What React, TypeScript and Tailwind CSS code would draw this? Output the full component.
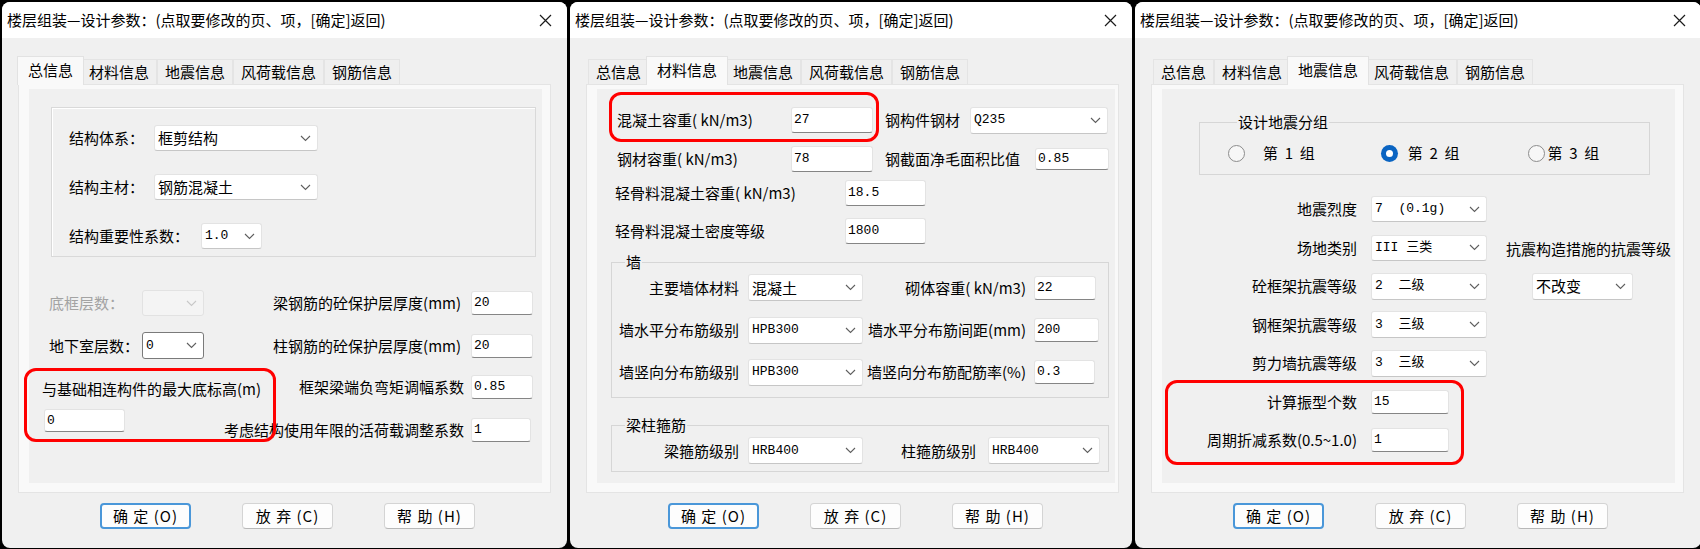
const TITLE = "楼层组装—设计参数：(点取要修改的页、项，[确定]返回)";
const TABS = ["总信息", "材料信息", "地震信息", "风荷载信息", "钢筋信息"];
const mono = "font-['Liberation_Mono','Noto_Sans_CJK_SC',monospace] text-[13px]";

function Chevron({ light }: { light?: boolean }) {
  return (
    <svg width="11" height="7" viewBox="0 0 11 7" className="shrink-0">
      <path d="M1 1l4.5 4.5L10 1" fill="none" stroke={light ? "#c8c8c8" : "#5f5f5f"} strokeWidth="1.1" />
    </svg>
  );
}

function Select({
  w,
  h = "h-[26px]",
  value = "",
  cjk,
  disabled,
  focused,
}: {
  w: string;
  h?: string;
  value?: string;
  cjk?: boolean;
  disabled?: boolean;
  focused?: boolean;
}) {
  const look = disabled
    ? "border-[#e2e2e2] bg-[#f4f4f4]"
    : focused
      ? "border-[#7a7a7a] bg-white"
      : "border-[#e3e3e3] border-b-[#c6c6c6] bg-white";
  return (
    <div className={`flex shrink-0 items-center justify-between rounded-[3px] border pl-[3px] pr-[6px] ${look} ${w} ${h}`}>
      <span className={`whitespace-pre ${cjk ? "text-[15px]" : mono}`}>{value}</span>
      <Chevron light={disabled} />
    </div>
  );
}

function Input({ w, h = "h-[24px]", value }: { w: string; h?: string; value: string }) {
  return (
    <div className={`flex shrink-0 items-center rounded-[3px] border border-[#e3e3e3] border-b-[#858585] bg-white pl-[2px] ${mono} ${w} ${h}`}>
      {value}
    </div>
  );
}

function Tabs({ active }: { active: number }) {
  return (
    <div className="flex h-[28px] items-end pl-[2px]">
      {TABS.map((t, i) =>
        i === active ? (
          <div key={t} className="relative z-10 -mx-[3px] -mb-px flex h-[29px] items-center border border-b-0 border-[#e2e2e2] bg-[#f9f9f9] px-[10px] pb-[3px]">
            {t}
          </div>
        ) : (
          <div key={t} className="flex h-[25px] items-center border border-b-0 border-[#e4e4e4] bg-[#efefef] px-[7px]">
            {t}
          </div>
        )
      )}
    </div>
  );
}

function Buttons() {
  return (
    <div className="mt-[10px] flex gap-[51px] pl-[98px]">
      <div className="flex h-[26px] w-[91px] items-center justify-center rounded-[4px] border-2 border-[#4a97d9] bg-[#fdfdfd] tracking-[1px] whitespace-pre">
        确 定 (O)
      </div>
      <div className="flex h-[26px] w-[91px] items-center justify-center rounded-[4px] border border-[#d4d4d4] border-b-[#b8b8b8] bg-[#fdfdfd] tracking-[1px] whitespace-pre">
        放 弃 (C)
      </div>
      <div className="flex h-[26px] w-[91px] items-center justify-center rounded-[4px] border border-[#d4d4d4] border-b-[#b8b8b8] bg-[#fdfdfd] tracking-[1px] whitespace-pre">
        帮 助 (H)
      </div>
    </div>
  );
}

function Dialog({
  width,
  active,
  mark,
  children,
}: {
  width: string;
  active: number;
  mark: string;
  children: React.ReactNode;
}) {
  return (
    <div className={`relative flex h-[546px] shrink-0 flex-col overflow-hidden rounded-[8px] bg-[#f0f0f0] ${width}`}>
      {/* title bar */}
      <div className="flex h-[36px] shrink-0 items-center bg-white pl-[5px] pr-[7px]">
        <span className="text-black">{TITLE}</span>
        <span className="ml-auto flex w-[30px] justify-center">
          <svg width="13" height="13" viewBox="0 0 13 13">
            <path d="M1 1l11 11M12 1L1 12" stroke="#1b1b1b" strokeWidth="1.2" />
          </svg>
        </span>
      </div>

      <div className="pl-[16px] pt-[18px]">
        <Tabs active={active} />
        <div className="flex h-[409px] w-[533px] border border-[#e4e4e4] bg-[#f9f9f9] pb-[9px] pl-[10px] pr-[8px] pt-[4px]">
          <div className="flex-1 bg-[#f0f0f0]">{children}</div>
        </div>
      </div>

      <Buttons />

      {/* red annotation */}
      <div className={`pointer-events-none absolute rounded-[12px] border-[3px] border-[#ff0000] ${mark}`} />
    </div>
  );
}

function GeneralTab() {
  return (
    <div className="pt-[18px]">
      <div className="ml-[22px] mr-[6px] flex h-[150px] flex-col gap-[23px] border border-[#d9d9d9] pl-[17px] pt-[17px] shadow-[inset_1px_1px_0_#ffffff]">
        <div className="flex h-[26px] items-center">
          <span className="w-[85px] shrink-0">结构体系：</span>
          <Select w="w-[164px]" value="框剪结构" cjk />
        </div>
        <div className="flex h-[26px] items-center">
          <span className="w-[85px] shrink-0">结构主材：</span>
          <Select w="w-[164px]" value="钢筋混凝土" cjk />
        </div>
        <div className="flex h-[26px] items-center">
          <span className="w-[132px] shrink-0">结构重要性系数：</span>
          <Select w="w-[61px]" value="1.0" />
        </div>
      </div>

      <div className="mt-[33px] flex flex-col pl-[13px] pr-[9px]">
        <div className="flex h-[26px] items-center justify-between">
          <div className="flex items-center pl-[7px]">
            <span className="w-[93px] shrink-0 text-[#a3a3a3]">底框层数：</span>
            <Select w="w-[62px]" disabled />
          </div>
          <div className="flex items-center gap-[10px]">
            <span>梁钢筋的砼保护层厚度(mm)</span>
            <Input w="w-[62px]" value="20" />
          </div>
        </div>

        <div className="mt-[16px] flex h-[27px] items-center justify-between">
          <div className="flex items-center pl-[7px]">
            <span className="w-[93px] shrink-0">地下室层数：</span>
            <Select w="w-[62px]" h="h-[27px]" value="0" focused />
          </div>
          <div className="flex items-center gap-[10px]">
            <span>柱钢筋的砼保护层厚度(mm)</span>
            <Input w="w-[62px]" value="20" />
          </div>
        </div>

        <div className="mt-[16px] flex h-[24px] items-center justify-between">
          <span className="pt-[3px]">与基础相连构件的最大底标高(m)</span>
          <div className="flex items-center gap-[7px]">
            <span>框架梁端负弯矩调幅系数</span>
            <Input w="w-[62px]" value="0.85" />
          </div>
        </div>

        <div className="mt-[10px] flex items-start justify-between">
          <div className="pl-[2px]">
            <Input w="w-[81px]" h="h-[23px]" value="0" />
          </div>
          <div className="mt-[9px] flex items-center gap-[7px] pr-[2px]">
            <span>考虑结构使用年限的活荷载调整系数</span>
            <Input w="w-[60px]" value="1" />
          </div>
        </div>
      </div>
    </div>
  );
}

function MaterialTab() {
  return (
    <div className="pl-[14px] pr-[6px] pt-[18px]">
      <div className="flex h-[26px] items-center pl-[6px]">
        <span className="w-[174px] shrink-0">混凝土容重( kN/m3)</span>
        <Input w="w-[82px]" h="h-[26px]" value="27" />
        <span className="ml-[12px] w-[85px] shrink-0">钢构件钢材</span>
        <Select w="w-[138px]" h="h-[27px]" value="Q235" />
      </div>
      <div className="mt-[13px] flex h-[26px] items-center pl-[6px]">
        <span className="w-[174px] shrink-0">钢材容重( kN/m3)</span>
        <Input w="w-[82px]" h="h-[26px]" value="78" />
        <span className="ml-[12px] w-[150px] shrink-0">钢截面净毛面积比值</span>
        <Input w="w-[74px]" h="h-[22px]" value="0.85" />
      </div>
      <div className="mt-[8px] flex h-[26px] items-center pl-[4px]">
        <span className="w-[230px] shrink-0">轻骨料混凝土容重( kN/m3)</span>
        <Input w="w-[81px]" h="h-[26px]" value="18.5" />
      </div>
      <div className="mt-[12px] flex h-[26px] items-center pl-[4px]">
        <span className="w-[230px] shrink-0">轻骨料混凝土密度等级</span>
        <Input w="w-[81px]" h="h-[26px]" value="1800" />
      </div>

      <fieldset className="mt-[8px] border border-[#d6d6d6] pb-[12px] pl-[5px] pt-[2px]">
        <legend className="ml-[8px] px-[1px] leading-[20px]">墙</legend>
        <div className="flex h-[27px] items-center">
          <span className="w-[122px] shrink-0 text-right">主要墙体材料</span>
          <Select w="ml-[9px] w-[115px]" h="h-[27px]" value="混凝土" cjk />
          <span className="w-[163px] shrink-0 text-right">砌体容重( kN/m3)</span>
          <Input w="ml-[8px] w-[62px]" value="22" />
        </div>
        <div className="mt-[16px] flex h-[26px] items-center">
          <span className="w-[122px] shrink-0 text-right">墙水平分布筋级别</span>
          <Select w="ml-[9px] w-[115px]" h="h-[27px]" value="HPB300" />
          <span className="w-[163px] shrink-0 text-right">墙水平分布筋间距(mm)</span>
          <Input w="ml-[8px] w-[65px]" value="200" />
        </div>
        <div className="mt-[16px] flex h-[26px] items-center">
          <span className="w-[122px] shrink-0 text-right">墙竖向分布筋级别</span>
          <Select w="ml-[9px] w-[115px]" h="h-[27px]" value="HPB300" />
          <span className="w-[163px] shrink-0 text-right">墙竖向分布筋配筋率(%)</span>
          <Input w="ml-[8px] w-[61px]" value="0.3" />
        </div>
      </fieldset>

      <fieldset className="mt-[17px] border border-[#d6d6d6] pb-[7px] pl-[5px] pt-[2px]">
        <legend className="ml-[8px] px-[1px] leading-[20px]">梁柱箍筋</legend>
        <div className="flex h-[27px] items-center">
          <span className="w-[122px] shrink-0 text-right">梁箍筋级别</span>
          <Select w="ml-[9px] w-[115px]" h="h-[27px]" value="HRB400" />
          <span className="w-[113px] shrink-0 text-right">柱箍筋级别</span>
          <Select w="ml-[12px] w-[112px]" h="h-[27px]" value="HRB400" />
        </div>
      </fieldset>
    </div>
  );
}

function Radio({ checked, className = "" }: { checked?: boolean; className?: string }) {
  return checked ? (
    <span className={`flex h-[17px] w-[17px] shrink-0 items-center justify-center rounded-full bg-[#0a64c2] ${className}`}>
      <span className="h-[7px] w-[7px] rounded-full bg-white" />
    </span>
  ) : (
    <span className={`block h-[17px] w-[17px] shrink-0 rounded-full border border-[#8c8c8c] bg-[#f7f7f7] ${className}`} />
  );
}

function QuakeRow({ label, children }: { label: string; children: React.ReactNode }) {
  return (
    <div className="flex h-[26px] items-center">
      <span className="w-[195px] shrink-0 text-right">{label}</span>
      {children}
    </div>
  );
}

function QuakeTab() {
  return (
    <div className="pt-[23px]">
      <fieldset className="ml-[37px] w-[451px] border border-[#d6d6d6] pb-[11px] pl-[28px] pt-[11px]">
        <legend className="ml-[9px] px-[1px] leading-[20px]">设计地震分组</legend>
        <div className="flex h-[20px] items-center">
          <Radio />
          <span className="ml-[18px] whitespace-pre">第  1  组</span>
          <Radio checked className="ml-[66px]" />
          <span className="ml-[10px] whitespace-pre">第  2  组</span>
          <Radio className="ml-[68px]" />
          <span className="ml-[3px] whitespace-pre">第  3  组</span>
        </div>
      </fieldset>

      <div className="mt-[21px] flex flex-col gap-[12.5px]">
        <QuakeRow label="地震烈度">
          <Select w="ml-[14px] w-[116px]" value="7  (0.1g)" />
        </QuakeRow>
        <QuakeRow label="场地类别">
          <Select w="ml-[14px] w-[116px]" value="III 三类" />
          <span className="ml-[19px] mt-[3px] shrink-0">抗震构造措施的抗震等级</span>
        </QuakeRow>
        <QuakeRow label="砼框架抗震等级">
          <Select w="ml-[14px] w-[116px]" h="h-[27px]" value="2  二级" />
          <Select w="ml-[45px] w-[101px]" h="h-[27px]" value="不改变" cjk />
        </QuakeRow>
        <QuakeRow label="钢框架抗震等级">
          <Select w="ml-[14px] w-[116px]" h="h-[27px]" value="3  三级" />
        </QuakeRow>
        <QuakeRow label="剪力墙抗震等级">
          <Select w="ml-[14px] w-[116px]" h="h-[27px]" value="3  三级" />
        </QuakeRow>
        <QuakeRow label="计算振型个数">
          <Input w="ml-[14px] w-[78px]" value="15" />
        </QuakeRow>
        <QuakeRow label="周期折减系数(0.5~1.0)">
          <Input w="ml-[14px] w-[78px]" value="1" />
        </QuakeRow>
      </div>
    </div>
  );
}

export default function App() {
  return (
    <div className="flex h-[549px] w-[1700px] gap-[3px] overflow-hidden whitespace-nowrap bg-black pl-[2px] pt-[2px] font-['Noto_Sans_CJK_SC',sans-serif] text-[15px] leading-[20px] text-black">
      <Dialog width="w-[565px]" active={0} mark="left-[22px] top-[366px] h-[74px] w-[252px]">
        <GeneralTab />
      </Dialog>
      <Dialog width="w-[562px]" active={1} mark="left-[39px] top-[90px] h-[50px] w-[270px]">
        <MaterialTab />
      </Dialog>
      <Dialog width="w-[566px]" active={2} mark="left-[30px] top-[378px] h-[85px] w-[299px]">
        <QuakeTab />
      </Dialog>
    </div>
  );
}
